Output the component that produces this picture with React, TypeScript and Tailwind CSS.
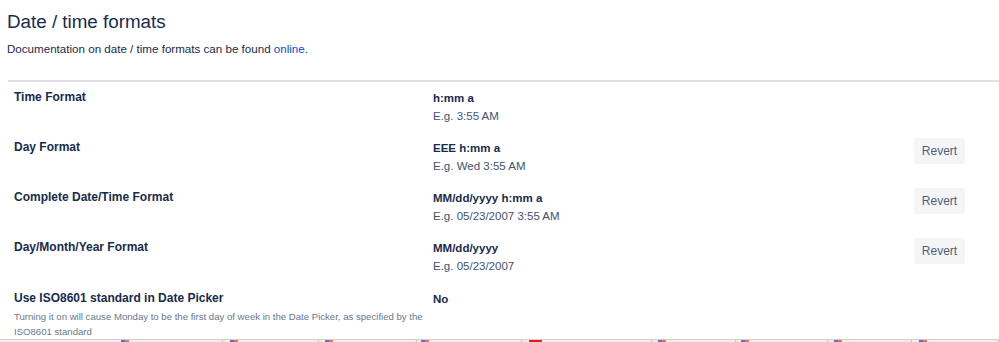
const rows = [
  { label: "Time Format", value: "h:mm a", example: "E.g. 3:55 AM", revert: false },
  { label: "Day Format", value: "EEE h:mm a", example: "E.g. Wed 3:55 AM", revert: true },
  { label: "Complete Date/Time Format", value: "MM/dd/yyyy h:mm a", example: "E.g. 05/23/2007 3:55 AM", revert: true },
  { label: "Day/Month/Year Format", value: "MM/dd/yyyy", example: "E.g. 05/23/2007", revert: true },
];

// bottom strip segments (a taskbar peeking in at the bottom edge)
const strip = [
  { w: 223, icon: 121, red: false },
  { w: 96, icon: 7, red: false },
  { w: 98, icon: 6, red: false },
  { w: 105, icon: 4, red: false },
  { w: 130, icon: 7, red: true },
  { w: 84, icon: 6, red: false },
  { w: 92, icon: 5, red: false },
  { w: 84, icon: 6, red: false },
  { w: 87, icon: 7, red: false },
];

export default function App() {
  return (
    <div className="w-[999px] h-[342px] bg-white overflow-hidden flex flex-col font-['Liberation_Sans',Arial,sans-serif] text-[#172b4d]">
      <div className="px-[7px] pt-[10px]">
        <h1 className="text-[18.8px] leading-[24px] font-normal">Date / time formats</h1>
        <p className="text-[11.6px] leading-[18px] mt-[6px]">
          Documentation on date / time formats can be found <a className="text-[#0052cc]">online</a>.
        </p>
      </div>

      <div className="ml-[8px] mt-[22px] border-t-2 border-[#dfe1e6]">
        {rows.map((r) => (
          <div key={r.label} className="h-[50px] flex pt-[6px] pl-[6px] pr-[34px]">
            <div className="w-[419px] text-[12px] leading-[18px] font-bold text-[#172b4d]">{r.label}</div>
            <div className="flex-1 pt-[1px]">
              <div className="text-[11.5px] leading-[18px] font-bold text-[#172b4d]">{r.value}</div>
              <div className="text-[11.5px] leading-[18px] text-[#42526e]">{r.example}</div>
            </div>
            {r.revert && (
              <button className="h-[26px] w-[51px] rounded-[3px] bg-[#f4f5f7] text-[12px] text-[#505f79]">
                Revert
              </button>
            )}
          </div>
        ))}
        <div className="flex pt-[7px] pl-[6px]">
          <div className="w-[419px]">
            <div className="text-[12px] leading-[18px] font-bold">Use ISO8601 standard in Date Picker</div>
            <div className="w-[413px] mt-[2px] text-[9.6px] leading-[15px] text-[#6b778c]">
              Turning it on will cause Monday to be the first day of week in the Date Picker, as specified by the ISO8601 standard
            </div>
          </div>
          <div className="text-[11.5px] leading-[18px] font-bold pt-[1px]">No</div>
        </div>
      </div>

      <div className="mt-auto h-[4px] flex border-t border-[#cfcfcf] bg-[#eeeeee]">
        {strip.map((s, i) => (
          <div key={i} style={{ width: s.w }} className="h-full border-r border-[#c4c4c4] flex">
            <div style={{ marginLeft: s.icon }} className="h-[3px] flex">
              {s.red ? (
                <div className="w-[13px] bg-[#e01e1e]" />
              ) : (
                <>
                  <div className="w-[4px] bg-[#5a6fd0]" />
                  <div className="w-[4px] bg-[#e8705a]" />
                </>
              )}
            </div>
          </div>
        ))}
      </div>
    </div>
  );
}
